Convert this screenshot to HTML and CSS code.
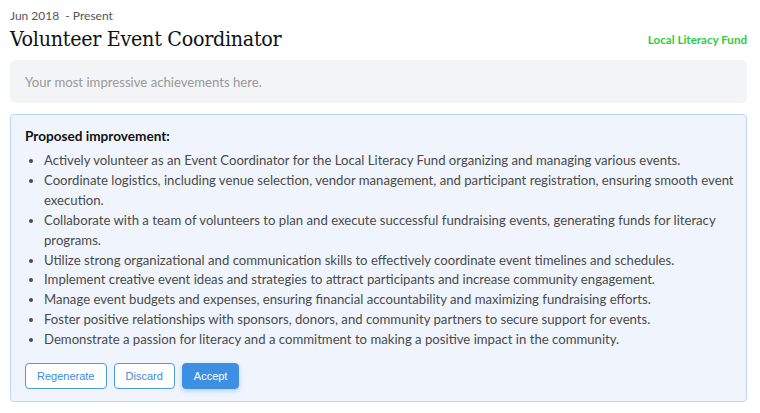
FILE: index.html
```html
<!DOCTYPE html>
<html>
<head>
<meta charset="utf-8">
<link rel="stylesheet" href="styles.css">
</head>
<body>
<div class="entry">
  <div class="dates">Jun 2018 &nbsp;- Present</div>
  <div class="head">
    <h1 class="title">Volunteer Event Coordinator</h1>
    <div class="org">Local Literacy Fund</div>
  </div>
  <div class="achievements">Your most impressive achievements here.</div>
  <div class="proposal">
    <div class="proposal-title">Proposed improvement:</div>
    <ul class="items">
      <li>Actively volunteer as an Event Coordinator for the Local Literacy Fund organizing and managing various events.</li>
      <li>Coordinate logistics, including venue selection, vendor management, and participant registration, ensuring smooth event execution.</li>
      <li>Collaborate with a team of volunteers to plan and execute successful fundraising events, generating funds for literacy programs.</li>
      <li>Utilize strong organizational and communication skills to effectively coordinate event timelines and schedules.</li>
      <li>Implement creative event ideas and strategies to attract participants and increase community engagement.</li>
      <li>Manage event budgets and expenses, ensuring financial accountability and maximizing fundraising efforts.</li>
      <li>Foster positive relationships with sponsors, donors, and community partners to secure support for events.</li>
      <li>Demonstrate a passion for literacy and a commitment to making a positive impact in the community.</li>
    </ul>
    <div class="actions">
      <button class="btn btn-outline">Regenerate</button>
      <button class="btn btn-outline">Discard</button>
      <button class="btn btn-primary">Accept</button>
    </div>
  </div>
</div>
</body>
</html>
```
FILE: styles.css
```css
* { box-sizing: border-box; }
html, body { margin: 0; padding: 0; background: #fff; }
body { font-family: Lato, "Open Sans", sans-serif; color: #333; }
.entry { padding: 8px 13px 0 10px; }
.dates { font-size: 12px; color: #555; line-height: 16px; }
.head { display: flex; justify-content: space-between; align-items: flex-end; margin-top: 2px; }
.title { margin: 0; font-family: "DejaVu Serif", "Liberation Serif", serif; font-stretch: condensed; font-weight: normal; font-size: 21.3px; line-height: 26px; color: #111; letter-spacing: -0.3px; }
.org { font-size: 11.6px; font-weight: bold; color: #2ecc40; line-height: 16px; margin-bottom: 4px; }
.achievements { margin-top: 8px; background: #f3f4f6; border-radius: 6px; height: 43px; padding: 0 15px; display: flex; align-items: center; font-size: 13.15px; color: #999; }
.proposal { margin-top: 11px; background: #f0f5fd; border: 1px solid #bcd8f5; border-radius: 4px; padding: 12px 8px 12px 14px; }
.proposal-title { font-weight: bold; font-size: 13.6px; color: #111; line-height: 18px; }
.items { margin: 6px 0 0 0; padding-left: 19px; font-size: 13.15px; line-height: 19.9px; color: #4a4a4a; }
.actions { display: flex; gap: 7px; margin-top: 13px; }
.btn { font-family: "Liberation Sans", Arial, sans-serif; font-size: 11px; height: 26px; border-radius: 4px; padding: 0 11px; cursor: pointer; }
.btn-outline { background: #fff; border: 1px solid #4a9be8; color: #3a8ae0; }
.btn-primary { background: #3d8fe3; border: 1px solid #3d8fe3; color: #fff; box-shadow: 0 2px 5px rgba(61,143,227,0.35); }
```
